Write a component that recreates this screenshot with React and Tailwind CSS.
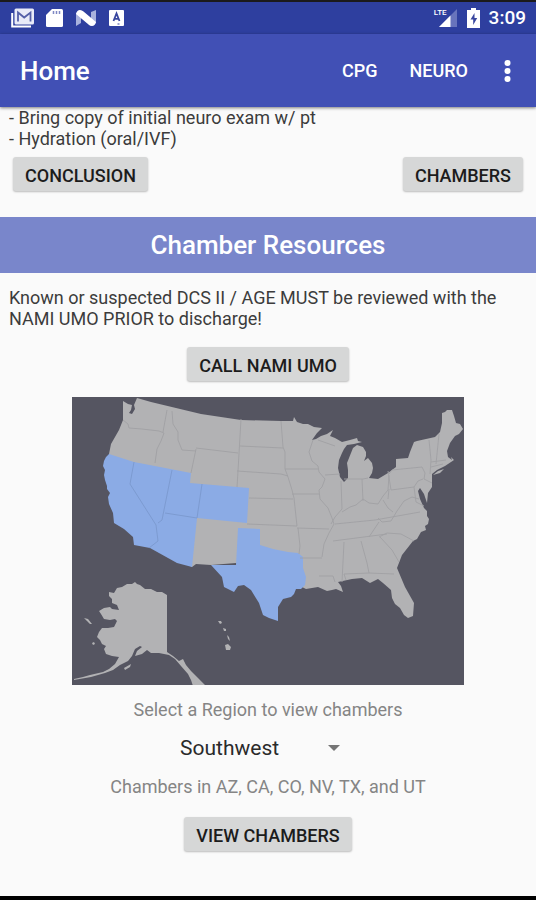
import React, { useState } from 'react';

const REGIONS = [
  { name: 'Southwest', states: 'AZ, CA, CO, NV, TX, and UT' },
];

const RaisedButton = ({ children }) => (
  <button className="h-[34px] rounded-[3px] bg-[#d6d7d7] px-3 pt-1 text-[18px] leading-[30px] font-medium text-[#1c1c1c] shadow-[0_1px_2px_rgba(0,0,0,0.25)]">
    {children}
  </button>
);

const StatusBar = () => (
  <div className="flex h-[34px] items-center justify-between border-t-2 border-[#1b1a1c] bg-[#2e3f9f] pr-[10px] pl-[11px] text-white">
    <div className="flex items-center gap-[11px]">
      <svg className="h-5 w-6" viewBox="0 0 24 20">
        <path d="M1.2 5v13.6H20" fill="none" stroke="#fff" strokeWidth="2" />
        <rect x="3.500" y="0.5" width="19.500" height="16" rx="1.5" fill="#e9ebf8" />
        <path d="M7 13.500V4.500l6.200 5L19.500 4.500v9" fill="none" stroke="#5560a8" strokeWidth="1.8" />
      </svg>
      <svg className="h-5 w-[17px]" viewBox="0 0 17 20">
        <path d="M6 1h9.500q1.500 0 1.500 1.500v15q0 1.500-1.500 1.500h-14Q0 19 0 17.500V7z" fill="#fff" />
        <path d="M7.500 3v3M10.500 3v3M13.500 3v3" stroke="#7f89c4" strokeWidth="1.5" />
      </svg>
      <svg className="ml-[2px] h-5 w-5" viewBox="0 0 20 20">
        <path d="M0 5l5-2v12l-5 3zM15 4l5-2v13l-5 2z" fill="#a9b2dd" />
        <path d="M0 6q1-4 4-4 2 0 3.500 1.500L20 14q-1 4-4 4-2 0-3.500-1.500z" fill="#fff" />
      </svg>
      <svg className="ml-[2px] h-5 w-[15px]" viewBox="0 0 15 20">
        <rect y="2" width="15" height="16" rx="1" fill="#fff" />
        <path d="M4.500 13 7.500 5.500l3 7.500M5.500 10.800h4" fill="none" stroke="#39479f" strokeWidth="1.8" />
        <path d="M8.500 15.500h2v1h-2z" fill="#39479f" />
      </svg>
    </div>
    <div className="flex items-center">
      <div className="flex">
        <span className="h-5 text-[8px] leading-[9px] font-medium">LTE</span>
        <svg className="-ml-2 h-5 w-[18px]" viewBox="0 0 18 20">
          <path d="M18 1v18H0z" fill="#8f98d0" opacity="0.6" />
          <path d="M11.500 7.500V19H0z" fill="#fff" />
        </svg>
      </div>
      <svg className="ml-[10px] h-5 w-[13px]" viewBox="0 0 13 20">
        <path d="M4 0h5v2h4v18H0V2h4z" fill="#fff" />
        <path d="M7.500 5 3.500 11.500h2.700V17l4-7H7.500z" fill="#39479f" />
      </svg>
      <span className="ml-[9px] text-[19px] leading-5 font-medium">3:09</span>
    </div>
  </div>
);

const AppBar = () => (
  <header className="relative flex h-[73px] items-center bg-[#4150b5] pr-[25px] pl-5 text-white shadow-[0_1px_3px_rgba(0,0,0,0.5)]">
    <h1 className="flex-1 text-[26px] leading-8 font-medium">Home</h1>
    <nav className="flex items-center">
      <button className="text-[18px] leading-6 font-medium">CPG</button>
      <button className="ml-8 text-[18px] leading-6 font-medium">NEURO</button>
      <button className="ml-9 h-6 w-[7px]" aria-label="More options">
        <svg className="h-6 w-[7px]" viewBox="0 0 7 24" fill="#fff">
          <circle cx="3.500" cy="4" r="3" />
          <circle cx="3.500" cy="12" r="3" />
          <circle cx="3.500" cy="20" r="3" />
        </svg>
      </button>
    </nav>
  </header>
);

// Path units are screen pixels, with the map's corner at 71,397
const RegionMap = () => (
  <svg
    className="h-auto w-[392px] max-w-full"
    viewBox="71 397 392 288"
    role="img"
    aria-label="Map of chamber regions"
  >
    <rect x="71" y="397" width="392" height="288" fill="#555561" />
    <g fill="#b2b2b4" strokeLinejoin="round">
      {/* lower 48 */}
      <path d="M122 401L127 404 131 405 130 410 128 413 131 414 134 409 133 405 136 398 150 402 175 408 200 414 240 420 280 421 292 421 293 417 296 422 302 424 307 424 313 427 321 428 316 433 311 440 315 439 320 436 326 434 332 430 329 436 334 438 341 442 349 440 356 438 357 441 361 442 353 444 346 445 343 449 341 453 338 460 337 468 339 477 343 482 347 478 347 470 346 463 350 453 352 448 356 445 362 447 365 452 365 456 363 461 367 458 371 463 372 468 371 473 368 478 377 479 387 473 395 467 395 459 407 458 409 452 411 447 413 442 416 441 434 437 439 432 441 423 441 413 444 412 446 410 451 410 453 416 455 423 459 424 462 429 458 434 454 436 449 443 446 451 447 457 451 460 450 457 453 460 444 466 436 470 431 474 431 487 427 493 426 503 423 494 419 488 417 491 419 499 423 508 426 511 426 516 428 519 427 524 424 526 425 530 420 532 416 539 412 541 401 555 396 568 404 587 413 603 412 616 407 618 403 615 399 608 394 604 391 598 390 590 382 583 377 579 369 583 361 578 351 579 337 582 340 586 342 592 335 589 331 590 326 591 317 587 305 589 297 585 237 566 235 563 210 565 195 564 191 567 170 555 133 520 108 470 108 454 110 444 118 430 122 420z" />
      {/* Long Island */}
      <path d="M432 475l5-4 6-2-4 4z" />
      {/* Alaska */}
      <path d="M166 595L161 592 156 592 150 589 144 589 139 585 136 584 134 582 131 584 126 584 121 587 116 588 113 593 108 592 108 596 111 599 111 603 116 605 118 610 111 609 109 607 103 608 98 611 100 614 103 619 109 620 114 619 116 621 113 627 107 628 101 628 98 632 96 637 99 640 101 644 105 646 103 649 105 654 111 656 118 657 114 664 108 669 102 672 89 675 82 677 73 679 73 680 90 677 104 673 112 670 119 665 127 661 131 656 134 649 139 646 141 647 136 651 134 656 141 654 146 650 150 653 158 653 168 655 174 659 180 666 187 674 190 680 192 686 205 686 198 679 190 671 185 665 182 659 178 661 172 656 166 652z" />
      <path d="M83 618l4 1 4 5-2 0-3-3zM91 643l2-1 1 2-2 1zM123 668l7-4-1 3-5 3z" />
      {/* Hawaii */}
      <path d="M217 621l3 0 1 2-2 1zM222 628l3 1 0 2-2 0zM226 635l2 2 1 4-2-2zM224 645l3-1 3 3-1 3-4 0z" />
    </g>
    <g fill="#8babe5">
      <path d="M108 454l25 8 57 11-1 10 59 5-2 35-50-5-5 49-15-4-27-15-16-3-1-8-9-8-10-6-1-10-4-9-1-7 2-4-3-4 0-3-2-6-1-5 1-5-2-4 1-5 2-4z" />
      <path d="M237 528l22 1 0 16 13 4 15 3 10 1 5 4 0 11 3 9-1 8-4 4-5 0-2 5-3 3-8 2-5 8 0 14-9-3-6-3-4-12-8-13-7-5-6 1-4 6-10-5-2-10-11-12 25 0z" />
    </g>
    <g fill="none" stroke="#a0a0a4" strokeWidth="0.9">
      <path d="M122 420l5 4 1 4 13 1 17 2 5 2-3 8-4 8-2 14" />
      <path d="M166 410l-4 22M171 411l1 13 5 8 0 8 4 10 14 1M195 449l-5 24M195 448l42 5M240 419l-3 52-1 16M239 446l43 2M236 471l44 3 7 2" />
      <path d="M280 421l2 26 2 5 0 17 3 8 4 13 2 8 3 28M284 469l33 0M248 498l44 1M246 524l50 2M291 494l27 0M296 528l32 1M297 528l2 18-1 8" />
      <path d="M312 440l-4 12 3 9 6 5 1 6 6 7-3 8-3 3 1 9 8 9 4 10 2 6-5 9-5 11-2 13" />
      <path d="M299 558l22 0M318 576l14 0 2 6M317 440l17 6M324 475l15-1M340 481l1 28M343 479l19 0 5-1M361 479l1 22M341 512l8-5 6-2 7-6 6 4 9 1 5-8 5-6 1-15" />
      <path d="M341 509l-7 8-4 7M334 524l40-4 45-8M332 541l54-7M368 537l10-15M387 471l3 19M390 490l23-3 4-6 5-2M388 474l3-4 30-3 3 6-1 6 8 4M428 440l2 20-1 14M438 434l-3 30M430 462l15-2M430 467l12-3" />
      <path d="M377 518l4 4 9-1 6-10 7-10 8-4 7 2M382 500l5 8 5 4M413 487l2 15 8 4M343 542l-2 40M360 541l6 22 2 10-25 1 2 6M379 537l12 13 7 12M378 537l8-4 14 1 13 7M368 573l25 1M388 489l-1 10" />
    </g>
    <path d="M133 462l-4 22 26 41 2 16-9 7M171 470l-10 50-4 3M201 484l-5 34M164 513l32 5" fill="none" stroke="#7b98ce" strokeWidth="0.9" />
  </svg>
);

const App = () => {
  const [region, setRegion] = useState('Southwest');
  const selected = REGIONS.find((r) => r.name === region);

  return (
    <div className="flex min-h-screen flex-col border-b-4 border-black bg-[#fafafa] font-['Roboto',sans-serif]">
      <StatusBar />
      <AppBar />

      <main className="flex flex-1 flex-col text-[18px] leading-[21px] text-[#3c3c3c]">
        <div className="px-[9px]">
          <p>- Bring copy of initial neuro exam w/ pt</p>
          <p>- Hydration (oral/IVF)</p>
        </div>
        <div className="flex justify-between px-[13px] pt-2">
          <RaisedButton>CONCLUSION</RaisedButton>
          <RaisedButton>CHAMBERS</RaisedButton>
        </div>

        <h2 className="mt-[26px] bg-[#7986cb] py-3 text-center text-[26px] leading-8 font-medium text-white">
          Chamber Resources
        </h2>

        <p className="px-[9px] pt-[14px]">
          Known or suspected DCS II / AGE MUST be reviewed with the NAMI UMO PRIOR to discharge!
        </p>

        <div className="flex flex-col items-center pt-[18px]">
          <RaisedButton>CALL NAMI UMO</RaisedButton>
          <div className="mt-4 flex w-full justify-center">
            <RegionMap />
          </div>
          <label htmlFor="region" className="mt-[14px] text-[#858585]">
            Select a Region to view chambers
          </label>
          <div className="relative mt-3">
            <select
              id="region"
              value={region}
              onChange={(e) => setRegion(e.target.value)}
              className="h-8 w-[176px] appearance-none bg-transparent text-[21px] leading-8 text-[#2a2a2a]"
            >
              {REGIONS.map((r) => (
                <option key={r.name} value={r.name}>
                  {r.name}
                </option>
              ))}
            </select>
            <svg className="pointer-events-none absolute top-[13px] right-4 h-[6px] w-3" viewBox="0 0 12 6">
              <path d="M0 0h12L6 6z" fill="#757575" />
            </svg>
          </div>
          <p className="mt-3 text-[#858585]">Chambers in {selected.states}</p>
          <div className="pt-5 pb-11">
            <RaisedButton>VIEW CHAMBERS</RaisedButton>
          </div>
        </div>
      </main>
    </div>
  );
};

export default App;
